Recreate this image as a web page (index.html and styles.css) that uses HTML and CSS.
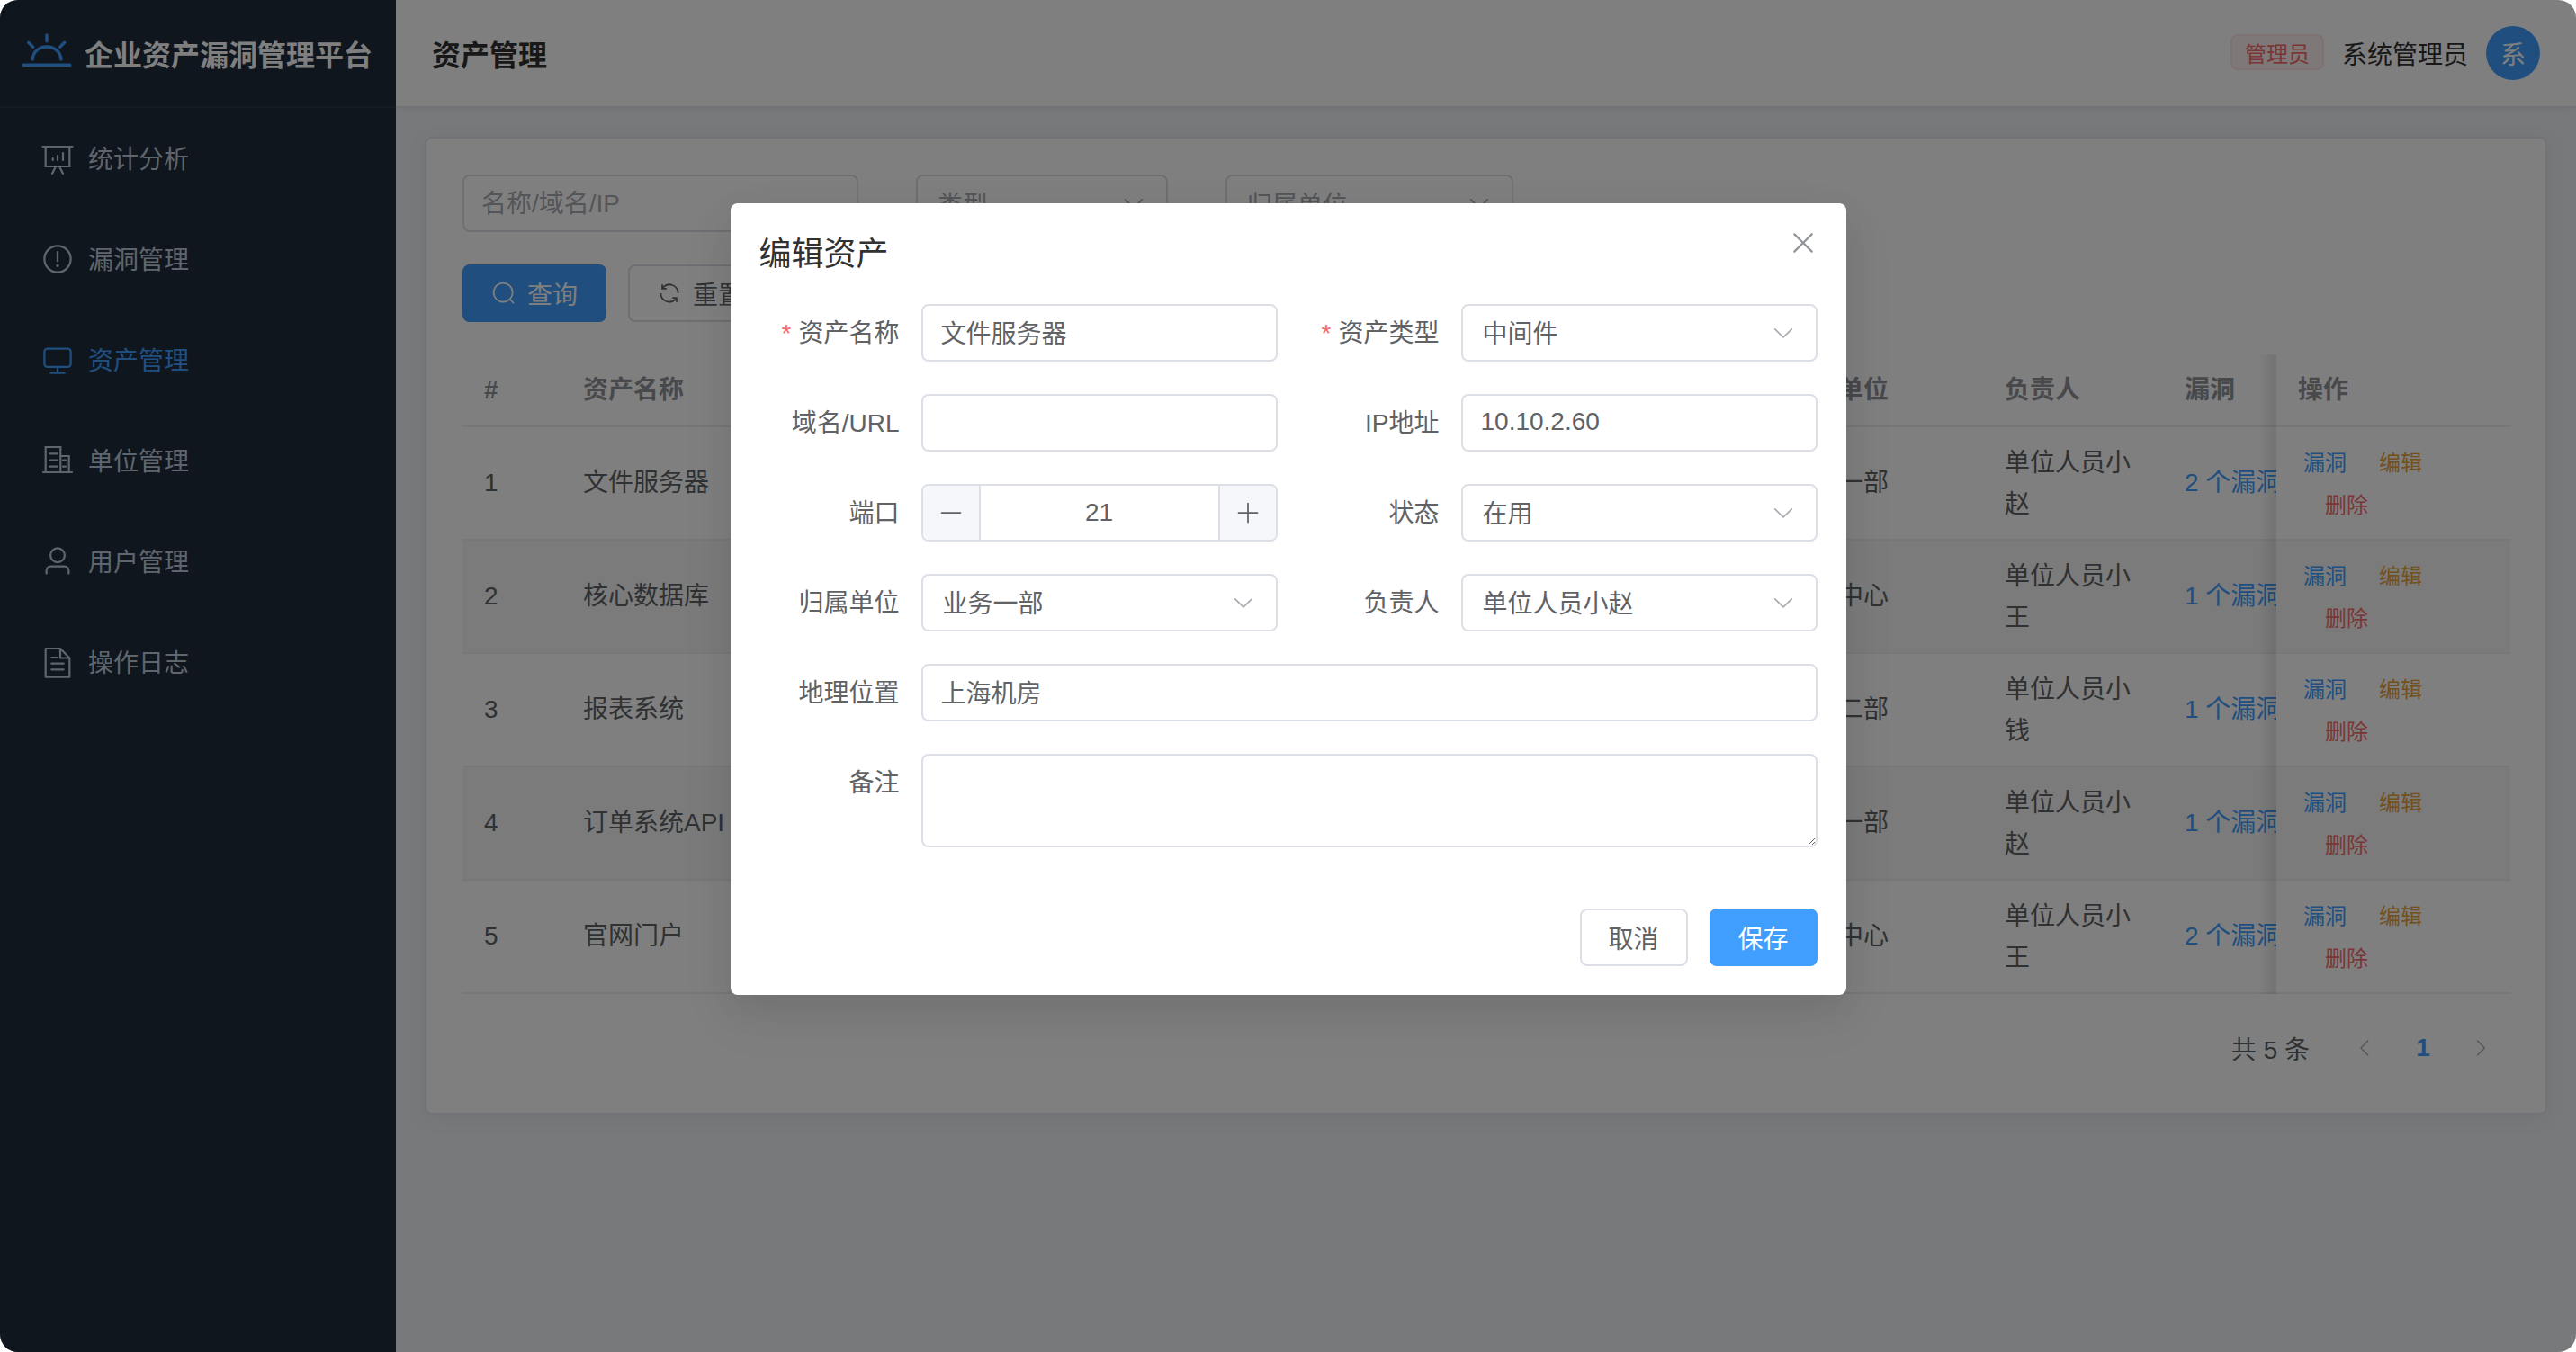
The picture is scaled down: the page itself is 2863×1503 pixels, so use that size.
FILE: index.html
```html
<!doctype html>
<html lang="zh-CN">
  <head>
    <meta charset="UTF-8" />
    <meta name="viewport" content="width=device-width, initial-scale=1.0" />
    <title>企业资产漏洞管理平台</title>
    <link rel="stylesheet" href="styles.css">
  </head>
  <body>
    <div class="app">
      <!-- 侧边栏 -->
      <aside class="sidebar">
        <div class="brand">
          <svg class="brand-logo" viewBox="0 0 56 56" fill="none" stroke="currentColor" stroke-width="3.4" stroke-linecap="round">
            <path d="M2 41.3h51.7" />
            <path d="M12 35C13 26 20 21 28 21S43 26 44 35" />
            <path d="M28 8v6.7M7.7 16.3l5 5M47.7 16.3l-5 5" />
          </svg>
          <span class="brand-name">企业资产漏洞管理平台</span>
        </div>
        <nav class="menu">
          <a class="menu-item">
            <svg class="menu-icon" viewBox="0 0 36 36" fill="none" stroke="currentColor" stroke-width="2.2" stroke-linecap="round">
              <path d="M1.5 5h33M4.7 5v22h26.600V5" />
              <path d="M12.7 20v-2M18 20v-5M24 20v-8M16 27l-4 8M20 27l4 8" />
            </svg>
            统计分析
          </a>
          <a class="menu-item">
            <svg class="menu-icon" viewBox="0 0 1024 1024" fill="currentColor">
              <path d="M512 64a448 448 0 1 1 0 896 448 448 0 0 1 0-896m0 832a384 384 0 0 0 0-768 384 384 0 0 0 0 768m48-176a48 48 0 1 1-96 0 48 48 0 0 1 96 0m-48-464a32 32 0 0 1 32 32v288a32 32 0 0 1-64 0V288a32 32 0 0 1 32-32" />
            </svg>
            漏洞管理
          </a>
          <a class="menu-item active">
            <svg class="menu-icon" viewBox="0 0 1024 1024" fill="currentColor">
              <path d="M544 768v128h192a32 32 0 1 1 0 64H288a32 32 0 1 1 0-64h192V768H192A128 128 0 0 1 64 640V256a128 128 0 0 1 128-128h640a128 128 0 0 1 128 128v384a128 128 0 0 1-128 128zM192 192a64 64 0 0 0-64 64v384a64 64 0 0 0 64 64h640a64 64 0 0 0 64-64V256a64 64 0 0 0-64-64z" />
            </svg>
            资产管理
          </a>
          <a class="menu-item">
            <svg class="menu-icon" viewBox="0 0 36 36" fill="none" stroke="currentColor" stroke-width="2.2" stroke-linecap="round">
              <path d="M2 31h32M4.7 31V3h16.600v28M21.300 13h9.400v18" />
              <path d="M9 10.300h9M9 17.700h9M9 24.700h9M24 17.700h3M24 24.700h3" />
            </svg>
            单位管理
          </a>
          <a class="menu-item">
            <svg class="menu-icon" viewBox="0 0 1024 1024" fill="currentColor">
              <path d="M512 512a192 192 0 1 0 0-384 192 192 0 0 0 0 384m0 64a256 256 0 1 1 0-512 256 256 0 0 1 0 512m320 320v-96a96 96 0 0 0-96-96H288a96 96 0 0 0-96 96v96a32 32 0 1 1-64 0v-96a160 160 0 0 1 160-160h448a160 160 0 0 1 160 160v96a32 32 0 1 1-64 0" />
            </svg>
            用户管理
          </a>
          <a class="menu-item">
            <svg class="menu-icon" viewBox="0 0 36 36" fill="none" stroke="currentColor" stroke-width="2.2" stroke-linecap="round" stroke-linejoin="round">
              <path d="M4.7 3H21l10.300 10.500V34.700H4.700z" />
              <path d="M21 3v10.500h10.300M11.300 13h6M11.300 19.700h13.400M11.300 26.300h13.400" />
            </svg>
            操作日志
          </a>
        </nav>
      </aside>

      <div class="main">
        <!-- 顶栏 -->
        <header class="topbar">
          <h1 class="page-title">资产管理</h1>
          <div class="user-box">
            <span class="role-tag">管理员</span>
            <span class="user-name">系统管理员</span>
            <span class="avatar">系</span>
          </div>
        </header>

        <section class="content">
          <div class="card">
            <!-- 查询条件 -->
            <div class="filter-row">
              <input class="filter-input" type="text" placeholder="名称/域名/IP" />
              <div class="filter-select type-select">
                <span>类型</span>
                <svg class="caret" viewBox="0 0 1024 1024" fill="currentColor"><path d="M831.872 340.864 512 652.672 192.128 340.864a30.592 30.592 0 0 0-42.752 0 29.120 29.120 0 0 0 0 41.600L489.664 714.240a32 32 0 0 0 44.672 0l340.288-331.712a29.120 29.120 0 0 0 0-41.728 30.592 30.592 0 0 0-42.752 0z" /></svg>
              </div>
              <div class="filter-select unit-select">
                <span>归属单位</span>
                <svg class="caret" viewBox="0 0 1024 1024" fill="currentColor"><path d="M831.872 340.864 512 652.672 192.128 340.864a30.592 30.592 0 0 0-42.752 0 29.120 29.120 0 0 0 0 41.600L489.664 714.240a32 32 0 0 0 44.672 0l340.288-331.712a29.120 29.120 0 0 0 0-41.728 30.592 30.592 0 0 0-42.752 0z" /></svg>
              </div>
            </div>
            <div class="action-row">
              <button class="btn btn-primary btn-wide">
                <svg class="btn-icon" viewBox="0 0 1024 1024" fill="currentColor"><path d="m795.904 750.720 124.992 124.928a32 32 0 0 1-45.248 45.248L750.656 795.904a416 416 0 1 1 45.248-45.248zM480 832a352 352 0 1 0 0-704 352 352 0 0 0 0 704" /></svg>
                查询
              </button>
              <button class="btn btn-wide">
                <svg class="btn-icon" viewBox="0 0 1024 1024" fill="currentColor"><path d="M771.776 794.880A384 384 0 0 1 128 512h64a320 320 0 0 0 555.712 216.448H654.720a32 32 0 1 1 0-64h149.056a32 32 0 0 1 32 32v148.928a32 32 0 1 1-64 0v-50.560zM276.288 295.616h92.992a32 32 0 0 1 0 64H220.160a32 32 0 0 1-32-32V178.560a32 32 0 0 1 64 0v50.560A384 384 0 0 1 896.128 512h-64a320 320 0 0 0-555.776-216.384z" /></svg>
                重置
              </button>
            </div>

            <!-- 资产表格 -->
            <table class="asset-table">
              <colgroup>
                <col class="col-no" />
                <col class="col-name" />
                <col class="col-type" />
                <col class="col-addr" />
                <col class="col-unit" />
                <col class="col-owner" />
                <col class="col-vuln" />
                <col class="col-ops" />
              </colgroup>
              <thead>
                <tr>
                  <th>#</th>
                  <th>资产名称</th>
                  <th>类型</th>
                  <th>域名/IP</th>
                  <th>归属单位</th>
                  <th>负责人</th>
                  <th>漏洞</th>
                  <th class="fixed-col">操作</th>
                </tr>
              </thead>
              <tbody>
                <tr>
                  <td>1</td>
                  <td>文件服务器</td>
                  <td>中间件</td>
                  <td>10.10.2.60</td>
                  <td>业务一部</td>
                  <td class="owner-cell">单位人员小赵</td>
                  <td class="vuln-cell">2 个漏洞</td>
                  <td class="fixed-col"><a class="op op-blue">漏洞</a><a class="op op-orange">编辑</a><a class="op op-red">删除</a></td>
                </tr>
                <tr>
                  <td>2</td>
                  <td>核心数据库</td>
                  <td>数据库</td>
                  <td>10.10.2.20</td>
                  <td>数据中心</td>
                  <td class="owner-cell">单位人员小王</td>
                  <td class="vuln-cell">1 个漏洞</td>
                  <td class="fixed-col"><a class="op op-blue">漏洞</a><a class="op op-orange">编辑</a><a class="op op-red">删除</a></td>
                </tr>
                <tr>
                  <td>3</td>
                  <td>报表系统</td>
                  <td>应用</td>
                  <td>10.10.2.30</td>
                  <td>业务二部</td>
                  <td class="owner-cell">单位人员小钱</td>
                  <td class="vuln-cell">1 个漏洞</td>
                  <td class="fixed-col"><a class="op op-blue">漏洞</a><a class="op op-orange">编辑</a><a class="op op-red">删除</a></td>
                </tr>
                <tr>
                  <td>4</td>
                  <td>订单系统API</td>
                  <td>应用</td>
                  <td>10.10.2.40</td>
                  <td>业务一部</td>
                  <td class="owner-cell">单位人员小赵</td>
                  <td class="vuln-cell">1 个漏洞</td>
                  <td class="fixed-col"><a class="op op-blue">漏洞</a><a class="op op-orange">编辑</a><a class="op op-red">删除</a></td>
                </tr>
                <tr>
                  <td>5</td>
                  <td>官网门户</td>
                  <td>应用</td>
                  <td>10.10.2.50</td>
                  <td>数据中心</td>
                  <td class="owner-cell">单位人员小王</td>
                  <td class="vuln-cell">2 个漏洞</td>
                  <td class="fixed-col"><a class="op op-blue">漏洞</a><a class="op op-orange">编辑</a><a class="op op-red">删除</a></td>
                </tr>
              </tbody>
            </table>

            <!-- 分页 -->
            <div class="pagination">
              <span class="total">共 5 条</span>
              <span class="page-btn">
                <svg viewBox="0 0 1024 1024" fill="currentColor"><path d="M609.408 149.376 277.760 489.600a32 32 0 0 0 0 44.672l331.648 340.352a29.120 29.120 0 0 0 41.728 0 30.592 30.592 0 0 0 0-42.752L339.264 511.936l311.872-319.872a30.592 30.592 0 0 0 0-42.688 29.120 29.120 0 0 0-41.728 0z" /></svg>
              </span>
              <span class="page-btn current">1</span>
              <span class="page-btn">
                <svg viewBox="0 0 1024 1024" fill="currentColor"><path d="M340.864 149.312a30.592 30.592 0 0 0 0 42.752L652.736 512 340.864 831.872a30.592 30.592 0 0 0 0 42.752 29.120 29.120 0 0 0 41.728 0L714.240 534.336a32 32 0 0 0 0-44.672L382.592 149.376a29.120 29.120 0 0 0-41.728 0z" /></svg>
              </span>
            </div>
          </div>
        </section>
      </div>

      <!-- 编辑弹窗 -->
      <div class="overlay">
        <div class="dialog">
          <div class="dialog-header">
            <span class="dialog-title">编辑资产</span>
            <svg class="dialog-close" viewBox="0 0 1024 1024" fill="currentColor"><path d="M764.288 214.592 512 466.880 259.712 214.592a31.936 31.936 0 0 0-45.120 45.120L466.752 512 214.528 764.224a31.936 31.936 0 1 0 45.120 45.184L512 557.184l252.288 252.288a31.936 31.936 0 0 0 45.120-45.120L557.120 512.064l252.288-252.352a31.936 31.936 0 1 0-45.120-45.184z" /></svg>
          </div>
          <form class="asset-form">
            <div class="form-item">
              <label class="form-label"><i class="req">*</i>资产名称</label>
              <input class="form-input" type="text" value="文件服务器" />
            </div>
            <div class="form-item">
              <label class="form-label"><i class="req">*</i>资产类型</label>
              <div class="form-select">
                <span>中间件</span>
                <svg class="caret" viewBox="0 0 1024 1024" fill="currentColor"><path d="M831.872 340.864 512 652.672 192.128 340.864a30.592 30.592 0 0 0-42.752 0 29.120 29.120 0 0 0 0 41.600L489.664 714.240a32 32 0 0 0 44.672 0l340.288-331.712a29.120 29.120 0 0 0 0-41.728 30.592 30.592 0 0 0-42.752 0z" /></svg>
              </div>
            </div>
            <div class="form-item">
              <label class="form-label">域名/URL</label>
              <input class="form-input" type="text" />
            </div>
            <div class="form-item">
              <label class="form-label">IP地址</label>
              <input class="form-input" type="text" value="10.10.2.60" />
            </div>
            <div class="form-item">
              <label class="form-label">端口</label>
              <div class="number-input">
                <span class="step">
                  <svg viewBox="0 0 1024 1024" fill="currentColor"><path d="M128 544h768a32 32 0 1 0 0-64H128a32 32 0 0 0 0 64" /></svg>
                </span>
                <span class="number-value">21</span>
                <span class="step">
                  <svg viewBox="0 0 1024 1024" fill="currentColor"><path d="M480 480V128a32 32 0 0 1 64 0v352h352a32 32 0 0 1 0 64H544v352a32 32 0 1 1-64 0V544H128a32 32 0 0 1 0-64z" /></svg>
                </span>
              </div>
            </div>
            <div class="form-item">
              <label class="form-label">状态</label>
              <div class="form-select">
                <span>在用</span>
                <svg class="caret" viewBox="0 0 1024 1024" fill="currentColor"><path d="M831.872 340.864 512 652.672 192.128 340.864a30.592 30.592 0 0 0-42.752 0 29.120 29.120 0 0 0 0 41.600L489.664 714.240a32 32 0 0 0 44.672 0l340.288-331.712a29.120 29.120 0 0 0 0-41.728 30.592 30.592 0 0 0-42.752 0z" /></svg>
              </div>
            </div>
            <div class="form-item">
              <label class="form-label">归属单位</label>
              <div class="form-select">
                <span>业务一部</span>
                <svg class="caret" viewBox="0 0 1024 1024" fill="currentColor"><path d="M831.872 340.864 512 652.672 192.128 340.864a30.592 30.592 0 0 0-42.752 0 29.120 29.120 0 0 0 0 41.600L489.664 714.240a32 32 0 0 0 44.672 0l340.288-331.712a29.120 29.120 0 0 0 0-41.728 30.592 30.592 0 0 0-42.752 0z" /></svg>
              </div>
            </div>
            <div class="form-item">
              <label class="form-label">负责人</label>
              <div class="form-select">
                <span>单位人员小赵</span>
                <svg class="caret" viewBox="0 0 1024 1024" fill="currentColor"><path d="M831.872 340.864 512 652.672 192.128 340.864a30.592 30.592 0 0 0-42.752 0 29.120 29.120 0 0 0 0 41.600L489.664 714.240a32 32 0 0 0 44.672 0l340.288-331.712a29.120 29.120 0 0 0 0-41.728 30.592 30.592 0 0 0-42.752 0z" /></svg>
              </div>
            </div>
            <div class="form-item full">
              <label class="form-label">地理位置</label>
              <input class="form-input" type="text" value="上海机房" />
            </div>
            <div class="form-item full">
              <label class="form-label">备注</label>
              <textarea class="form-textarea"></textarea>
            </div>
          </form>
          <div class="dialog-footer">
            <button class="btn btn-dialog">取消</button>
            <button class="btn btn-dialog btn-primary">保存</button>
          </div>
        </div>
      </div>
    </div>
  </body>
</html>
```

FILE: styles.css
```css
/* 基础 */
* {
  margin: 0;
  padding: 0;
  box-sizing: border-box;
}

body {
  background: #fff;
  font-family: "Liberation Sans", "Noto Sans CJK SC", sans-serif;
  font-size: 28px;
  color: #606266;
}

.app {
  position: relative;
  display: flex;
  height: 100vh;
  border-radius: 20px;
  overflow: hidden;
  background: #f0f2f5;
}

/* 侧边栏 */
.sidebar {
  flex: none;
  width: 440px;
  background: #1f2d3d;
}

.brand {
  display: flex;
  align-items: center;
  height: 120px;
  padding-left: 24px;
  border-bottom: 2px solid rgba(255, 255, 255, 0.05);
}

.brand-logo {
  width: 56px;
  height: 56px;
  margin-right: 14px;
  color: #409eff;
}

.brand-name {
  font-size: 32px;
  font-weight: 700;
  color: #fff;
}

.menu-item {
  display: flex;
  align-items: center;
  height: 112px;
  padding-left: 46px;
  padding-bottom: 2px;
  color: #bfcbd9;
}

.menu-item.active {
  color: #409eff;
}

.menu-icon {
  flex: none;
  width: 36px;
  height: 36px;
  margin-top: 2px;
  margin-right: 16px;
}

/* 顶栏 */
.main {
  flex: 1;
  min-width: 0;
  display: flex;
  flex-direction: column;
}

.topbar {
  position: relative;
  z-index: 1;
  flex: none;
  display: flex;
  align-items: center;
  justify-content: space-between;
  height: 120px;
  padding: 0 40px;
  background: #fff;
  border-bottom: 2px solid #e4e7ed;
  box-shadow: 0 1px 8px rgba(0, 0, 0, 0.05);
}

.page-title {
  font-size: 32px;
  font-weight: 700;
  color: #303133;
}

.user-box {
  display: flex;
  align-items: center;
  gap: 20px;
}

.role-tag {
  display: flex;
  align-items: center;
  height: 40px;
  padding: 0 14px;
  margin-top: -2px;
  font-size: 24px;
  color: #f56c6c;
  background: #fef0f0;
  border: 2px solid #fde2e2;
  border-radius: 8px;
}

.user-name {
  color: #303133;
}

.avatar {
  display: flex;
  align-items: center;
  justify-content: center;
  width: 60px;
  height: 60px;
  border-radius: 50%;
  background: #409eff;
  color: #fff;
}

/* 内容卡片 */
.content {
  flex: 1;
  padding: 32px;
}

.card {
  padding: 40px;
  background: #fff;
  border: 2px solid #e4e7ed;
  border-radius: 8px;
  box-shadow: 0 4px 24px rgba(0, 0, 0, 0.05);
}

.filter-row {
  display: flex;
  gap: 64px;
  margin-bottom: 36px;
}

.filter-input,
.filter-select {
  height: 64px;
  background: #fff;
  border: 2px solid #dcdfe6;
  border-radius: 8px;
  font: inherit;
  color: #a8abb2;
}

.filter-input {
  width: 440px;
  padding: 2px 19px 0;
}

.filter-input::placeholder {
  color: #a8abb2;
  opacity: 1;
}

.filter-select {
  display: flex;
  align-items: center;
  justify-content: space-between;
  padding: 0 22px;
}

.type-select {
  width: 280px;
}

.unit-select {
  width: 320px;
}

.caret {
  flex: none;
  width: 28px;
  height: 28px;
  color: #a8abb2;
}

.action-row {
  display: flex;
  gap: 24px;
  margin-bottom: 36px;
}

/* 按钮 */
.btn {
  display: inline-flex;
  align-items: center;
  justify-content: center;
  height: 64px;
  background: #fff;
  border: 2px solid #dcdfe6;
  border-radius: 8px;
  font: inherit;
  color: #606266;
}

.btn-primary {
  background: #409eff;
  border-color: #409eff;
  color: #fff;
}

.btn-wide {
  width: 160px;
}

.btn-icon {
  width: 28px;
  height: 28px;
  margin-right: 12px;
}

.btn-dialog {
  width: 120px;
}

/* 表格 */
.asset-table {
  width: 100%;
  table-layout: fixed;
  border-collapse: collapse;
}

.col-no { width: 110px; }
.col-name { width: 340px; }
.col-type { width: 300px; }
.col-addr { width: 699px; }
.col-unit { width: 241px; }
.col-owner { width: 200px; }
.col-vuln { width: 126px; }
.col-ops { width: 260px; }

.asset-table th,
.asset-table td {
  padding: 0 24px;
  text-align: left;
  line-height: 46px;
  border-bottom: 2px solid #ebeef5;
}

.asset-table th {
  height: 80px;
  color: #909399;
  font-weight: 700;
  background: #fff;
}

.asset-table td {
  height: 126px;
  background: #fff;
}

.asset-table tbody tr:nth-child(even) td {
  background: #f7f7f7;
}

.asset-table .owner-cell {
  padding-top: 2px;
}

.vuln-cell {
  white-space: nowrap;
  color: #409eff;
}

/* 操作列固定在右侧 */
.asset-table .fixed-col {
  position: sticky;
  right: 0;
}

.asset-table td.fixed-col {
  padding-top: 1px;
}

.fixed-col::before {
  content: '';
  position: absolute;
  top: 0;
  bottom: -2px;
  left: -20px;
  width: 20px;
  background: linear-gradient(to left, rgba(0, 0, 0, 0.1), transparent);
}

.op {
  display: inline-block;
  padding: 0 6px;
  margin-left: 24px;
  font-size: 24px;
}

.op:first-child {
  margin-left: 0;
}

.op-blue { color: #409eff; }
.op-orange { color: #e6a23c; }
.op-red { color: #f56c6c; }

/* 分页 */
.pagination {
  display: flex;
  align-items: center;
  justify-content: flex-end;
  margin-top: 28px;
}

.total {
  margin-right: 30px;
  color: #606266;
}

.page-btn {
  display: flex;
  align-items: center;
  justify-content: center;
  width: 64px;
  height: 64px;
  color: #a8abb2;
}

.page-btn svg {
  width: 24px;
  height: 24px;
}

.page-btn.current {
  color: #409eff;
  font-weight: 700;
}

/* 遮罩和弹窗 */
.overlay {
  position: absolute;
  top: 0;
  left: 0;
  right: 0;
  bottom: 0;
  z-index: 10;
  background: rgba(0, 0, 0, 0.5);
}

.dialog {
  width: 1240px;
  margin: 226px auto 0;
  padding: 32px;
  background: #fff;
  border-radius: 8px;
  box-shadow: 0 24px 64px 8px rgba(0, 0, 0, 0.04), 0 16px 40px rgba(0, 0, 0, 0.08);
}

.dialog-header {
  position: relative;
  height: 48px;
  margin-bottom: 32px;
}

.dialog-title {
  display: block;
  font-size: 36px;
  line-height: 50px;
  color: #303133;
}

.dialog-close {
  position: absolute;
  top: -6px;
  right: -2px;
  width: 36px;
  height: 36px;
  color: #909399;
}

.asset-form {
  display: grid;
  grid-template-columns: minmax(0, 1fr) minmax(0, 1fr);
  column-gap: 24px;
}

.form-item {
  display: flex;
  align-items: flex-start;
  margin-bottom: 36px;
}

.form-label {
  flex: none;
  display: flex;
  justify-content: flex-end;
  width: 180px;
  height: 64px;
  padding-right: 24px;
  line-height: 66px;
  color: #606266;
}

.form-item.full {
  grid-column: 1 / -1;
}

.req {
  margin-right: 8px;
  font-style: normal;
  color: #f56c6c;
}

.form-input,
.form-select,
.form-textarea,
.number-input {
  flex: 1;
  min-width: 0;
  background: #fff;
  border: 2px solid #dcdfe6;
  border-radius: 8px;
  font: inherit;
  color: #606266;
}

.form-input,
.form-select,
.number-input {
  height: 64px;
}

.form-input {
  padding: 0 20px 2px;
}

.form-select {
  display: flex;
  align-items: center;
  justify-content: space-between;
  padding: 0 22px 2px;
}

.form-select .caret {
  margin-top: 2px;
}

.form-textarea {
  display: block;
  height: 104px;
  padding: 10px 20px;
  resize: vertical;
}

/* 数字输入 */
.number-input {
  display: flex;
  align-items: center;
  overflow: hidden;
}

.step {
  flex: none;
  display: flex;
  align-items: center;
  justify-content: center;
  width: 64px;
  height: 100%;
  background: #f5f7fa;
}

.step:first-child {
  border-right: 2px solid #dcdfe6;
}

.step:last-child {
  border-left: 2px solid #dcdfe6;
}

.step svg {
  width: 28px;
  height: 28px;
}

.number-value {
  flex: 1;
  text-align: center;
}

.dialog-footer {
  display: flex;
  justify-content: flex-end;
  gap: 24px;
  padding-top: 32px;
}
```
